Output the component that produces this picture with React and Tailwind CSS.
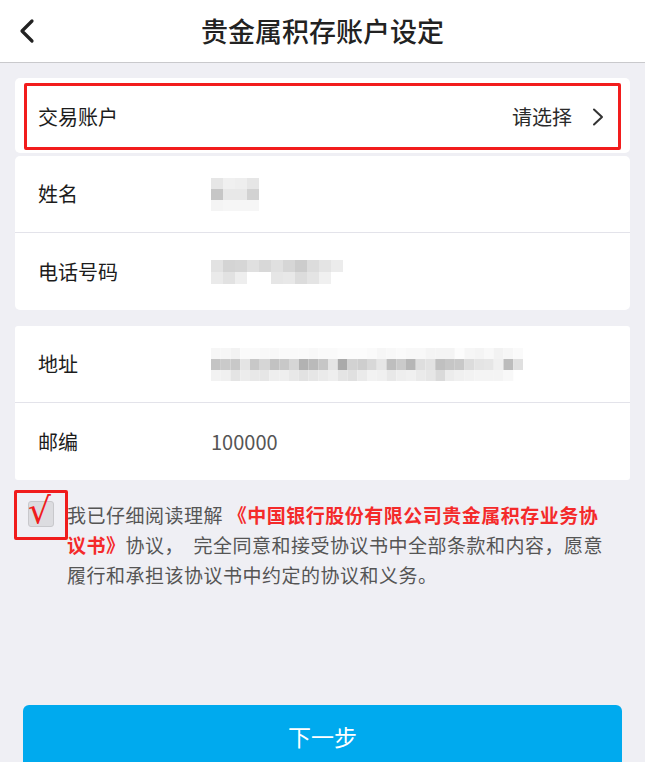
import React from "react";

const F = { fontFamily: '"Noto Sans CJK SC", "Noto Sans", sans-serif' };

function Pixels({ rows, cell, h }) {
  const cols = Math.max(...rows.map((r) => r.length));
  return (
    <svg width={cols * cell} height={rows.length * h} className="block">
      {rows.map((r, y) =>
        r.map((v, x) =>
          v ? (
            <rect key={x + "-" + y} x={x * cell} y={y * h} width={cell} height={h} fill={"#" + v + v + v} />
          ) : null
        )
      )}
    </svg>
  );
}

const nameRows = [
  ["e6", "f0", "ee", "e6"],
  ["c6", "e8", "e8", "d2"],
  ["f4", "f6", "f6", "f6"],
];
const phoneRows = [
  ["e2", "d4", "d6", "e0", "d8", "e0", "d6", "cc", "dc", "e4", "ec"],
  ["ea", "e2", "ee", null, null, "e6", "e8", "dc", "e4", "f0", null],
];
const addrRows = [
  ["f6", "f6", "f2", "fa", "fa", "f8", "f8", "fa", "fa", "fa", "f8", "fa", "fa", "fc", "fc", "fc", "fa", "f6", "f8", "fa", "f8", "f8", "f4", "f4", "f4", "fc", "f6", "f4", "f8", "f2", "f6", "fa"],
  ["c4", "ca", "c8", "e4", "c8", "d6", "c2", "c8", "d6", "b2", "ba", "c6", "e4", "aa", "d2", "ce", "d8", "e6", "be", "ca", "b6", "de", "e2", "c0", "c6", "c8", "dc", "e4", "e6", "f0", "bc", "e0"],
  ["f2", "f0", "e4", "ec", "e8", "e6", "ee", "ee", "e8", "e2", "e6", "ea", "ee", "e4", "e0", "ea", "f2", "f0", "e8", "ee", "f0", "ea", "e6", "da", "ec", "f0", "f2", "f4", "f4", "f4", "f8", null],
];

function Row({ label, children, divider }) {
  return (
    <div className={"flex items-center h-[77px] " + (divider ? "border-b border-[#e3e3ea]" : "")}>
      <div className="w-[196px] pl-[23px] text-[20px] text-[#1c1c1c]">{label}</div>
      <div className="flex-1 text-[20px] text-[#555]">{children}</div>
    </div>
  );
}

export default function App() {
  return (
    <div style={F} className="w-[645px] h-[762px] overflow-hidden bg-[#efeff4] flex flex-col">
      <div className="h-[63px] bg-white border-b border-[#c9c9cc] flex items-center relative shrink-0">
        <svg width="20" height="28" viewBox="0 0 20 28" className="ml-[17px]">
          <path d="M15 4 L5 14 L15 24" fill="none" stroke="#222" strokeWidth="3.2" strokeLinecap="round" strokeLinejoin="round" />
        </svg>
        <div className="absolute inset-0 flex items-center justify-center text-[27px] font-medium text-[#222]">
          贵金属积存账户设定
        </div>
      </div>

      <div className="mx-[15px] mt-[15px] bg-white rounded-[5px] pt-[5px] pb-[3px] px-[9px]">
        <div className="h-[67px] border-[3px] border-[#f21d1d] rounded-[2px] flex items-center pl-[11px] pr-[14px]">
          <div className="flex-1 text-[20px] text-[#1c1c1c]">交易账户</div>
          <div className="text-[20px] text-[#2a2a2a] mr-[20px]">请选择</div>
          <svg width="12" height="18" viewBox="0 0 12 18">
            <path d="M2 1.5 L10 9 L2 16.5" fill="none" stroke="#333" strokeWidth="2" strokeLinecap="round" strokeLinejoin="round" />
          </svg>
        </div>
      </div>

      <div className="mx-[15px] mt-[3px] bg-white rounded-[5px]">
        <Row label="姓名" divider>
          <Pixels rows={nameRows} cell={12} h={11} />
        </Row>
        <Row label="电话号码">
          <Pixels rows={phoneRows} cell={12} h={12} />
        </Row>
      </div>

      <div className="mx-[15px] mt-[16px] bg-white rounded-[3px]">
        <Row label="地址" divider>
          <Pixels rows={addrRows} cell={9.75} h={11} />
        </Row>
        <Row label="邮编">100000</Row>
      </div>

      <div className="flex mt-[20px] ml-[14px] mr-[20px]">
        <div className="relative w-[54px] h-[50px] shrink-0 border-[3px] border-[#f01c1c] rounded-[2px] -mt-[10px]">
          <div className="absolute left-[11px] top-[8px] w-[26px] h-[26px] bg-[#dcdce0] border border-[#c8c8cc] rounded-[3px]" />
          <div className="absolute left-[11px] -top-[3px] text-[36px] leading-[42px] text-[#f01c1c] font-['DejaVu_Sans',sans-serif]">√</div>
        </div>
        <p className="text-[19px] leading-[30px] text-[#555] -ml-[1px] tracking-[0.5px] whitespace-nowrap">
          我已仔细阅读理解 <span className="text-[#f42a2a] font-bold">《中国银行股份有限公司贵金属积存业务协</span>
          <br />
          <span className="text-[#f42a2a] font-bold">议书》</span>协议，&nbsp; 完全同意和接受协议书中全部条款和内容，愿意
          <br />
          履行和承担该协议书中约定的协议和义务。
        </p>
      </div>

      <div className="mt-auto mx-[23px] h-[57px] pt-[6px] bg-[#00aaee] rounded-t-[6px] flex items-center justify-center text-white text-[23px] shrink-0">
        下一步
      </div>
    </div>
  );
}
